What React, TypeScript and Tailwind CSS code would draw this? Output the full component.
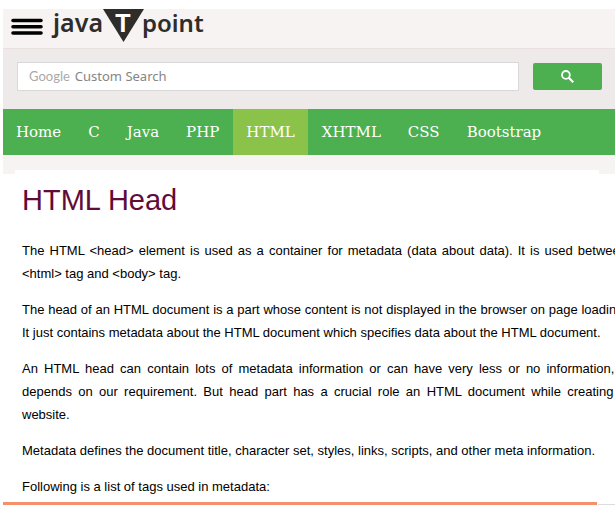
const navItems = ["Home", "C", "Java", "PHP", "HTML", "XHTML", "CSS", "Bootstrap"];

const paragraphs = [
  "The HTML <head> element is used as a container for metadata (data about data). It is used between <html> tag and <body> tag.",
  "The head of an HTML document is a part whose content is not displayed in the browser on page loading. It just contains metadata about the HTML document which specifies data about the HTML document.",
  "An HTML head can contain lots of metadata information or can have very less or no information, it depends on our requirement. But head part has a crucial role an HTML document while creating a website.",
  "Metadata defines the document title, character set, styles, links, scripts, and other meta information.",
  "Following is a list of tags used in metadata:",
];

function Logo() {
  return (
    <a href="#home" aria-label="javaTpoint" className="ml-2 block">
      <svg width="160" height="36" viewBox="0 0 160 36" className="block overflow-visible" fill="#2f2d2b">
        <text x="2" y="23" fontSize="25" fontWeight="600" fontFamily="'Noto Sans', sans-serif">java</text>
        <path d="M52 0h41L72.500 33z" />
        <text x="72" y="23" textAnchor="middle" fontSize="25" fontWeight="700" fill="#fff" fontFamily="'Liberation Sans', sans-serif">T</text>
        <text x="91" y="23" fontSize="24" fontWeight="600" fontFamily="'Noto Sans', sans-serif">point</text>
      </svg>
    </a>
  );
}

function Header() {
  return (
    <header className="flex h-10 items-start border-b border-[#eae0e0] bg-[#f7f3f2] pl-2">
      <button type="button" aria-label="Open menu" className="mt-2">
        <svg width="32" height="20" viewBox="0 0 32 20" className="block" stroke="#000" strokeWidth="3.6" strokeLinecap="round">
          <path d="M2 3.500h28M2 9.800h28M2 16h28" />
        </svg>
      </button>
      <Logo />
    </header>
  );
}

function SearchBar() {
  return (
    <form className="flex h-15 items-center bg-[#eeeaea] pr-[13px] pb-[5px] pl-3.5" onSubmit={(e) => e.preventDefault()}>
      <label className="flex h-[29px] min-w-0 flex-1 items-center gap-[5px] border border-[#d9d9d9] bg-white pl-[11px]">
        <span className="font-[Lato,sans-serif] text-[13px] text-[#aaa]">Google</span>
        <input
          type="text"
          aria-label="Google Custom Search"
          placeholder="Custom Search"
          className="min-w-0 flex-1 font-['Noto_Sans',sans-serif] text-[13px] outline-none placeholder:text-[#858585]"
        />
      </label>
      <button type="submit" aria-label="Search" className="ml-3.5 flex h-[27px] w-[69px] items-center justify-center rounded-xs bg-[#4caf50]">
        <svg width="13" height="13" viewBox="0 0 13 13" fill="none" stroke="#fff" strokeWidth="1.8">
          <circle cx="4.900" cy="4.900" r="3.900" />
          <path d="M7.800 7.800l4.500 4.500" strokeWidth="2.2" />
        </svg>
      </button>
    </form>
  );
}

export default function App() {
  return (
    <div className="h-screen overflow-hidden bg-white pt-[9px] pl-[3px]">
      <div className="flex h-full flex-col">
        <Header />
        <SearchBar />
        <nav className="flex h-[46px] shrink-0 gap-px bg-[#4caf50] font-['DejaVu_Serif',serif] text-[15px] text-white">
          {navItems.map((item) => (
            <a
              key={item}
              href="#topic"
              className={`flex items-center px-[13px] ${item === "HTML" ? "bg-[#8bc34a]" : ""}`}
            >
              {item}
            </a>
          ))}
        </nav>
        <div className="bg-[#f7f3f2] pt-[15px] pr-4 pl-3">
          <div className="h-1 bg-white" />
        </div>
        <main className="-mr-3 min-h-0 flex-1 overflow-hidden pt-1 pl-[19px] font-['Liberation_Sans',sans-serif]">
          <h1 className="mb-4 text-[29px] leading-[45px] text-[#610b38]">HTML Head</h1>
          {paragraphs.map((text) => (
            <p key={text} className="mb-[13px] text-justify text-[13px] leading-[23px] text-black">
              {text}
            </p>
          ))}
        </main>
        <div className="flex h-[3px] shrink-0 items-end">
          <div className="mr-px h-full flex-1 bg-[#f4906c]" />
          <div className="h-px w-[17px] bg-[#dcdcdc]" />
        </div>
      </div>
    </div>
  );
}
